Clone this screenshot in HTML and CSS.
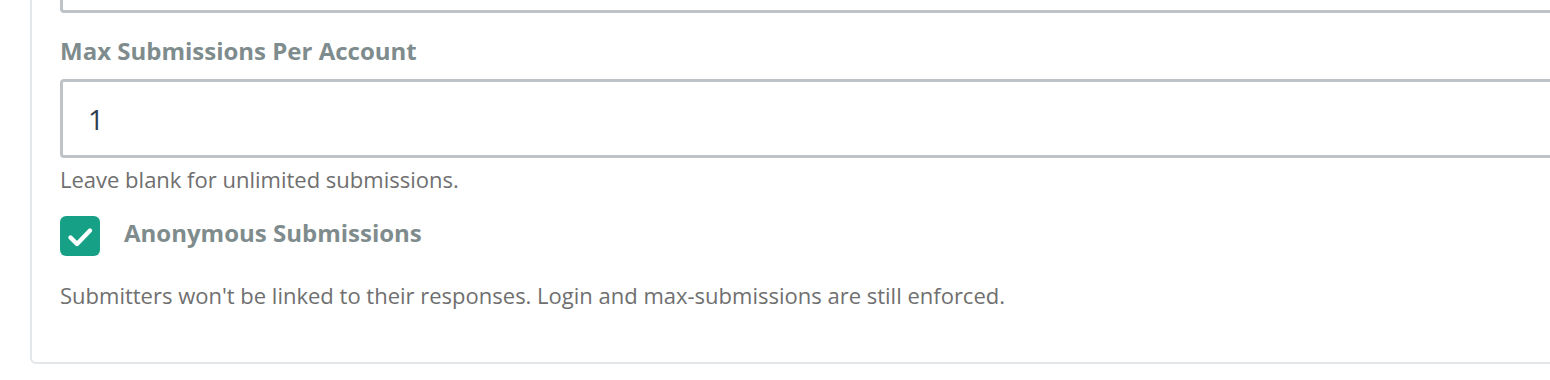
FILE: index.html
```html
<!DOCTYPE html>
<html>
<head>
  <title>Form Settings</title>
  <link rel="stylesheet" href="styles.css">
</head>
<body>
  <div class="card">
    <div class="field">
      <input type="text" class="input input-prev" value="">
    </div>

    <div class="field">
      <label class="label" for="max-submissions">Max Submissions Per Account</label>
      <input type="text" class="input" id="max-submissions" value="1">
      <p class="help">Leave blank for unlimited submissions.</p>
    </div>

    <div class="field">
      <label class="check-row">
        <span class="checkbox">
          <svg class="check-icon" viewBox="0 0 40 40">
            <path d="M10.5 21.5L17 28L30 14.5" fill="none" stroke="#fff" stroke-width="4.4" stroke-linecap="round" stroke-linejoin="round"/>
          </svg>
        </span>
        <span class="label check-label">Anonymous Submissions</span>
      </label>
      <p class="help help-check">Submitters won't be linked to their responses. Login and max-submissions are still enforced.</p>
    </div>
  </div>
</body>
</html>
```

FILE: styles.css
```css
body {
  margin: 0;
  font-family: "Open Sans", Arial, sans-serif;
  background-color: #fff;
  overflow: hidden;
}

.card {
  margin-left: 30px;
  margin-right: -40px;
  margin-top: -60px;
  padding: 0 0 52px 28px;
  border: 2px solid #e4e7ea;
  border-top: none;
  border-radius: 0 0 6px 6px;
}

.input {
  display: block;
  box-sizing: border-box;
  width: 100%;
  height: 79px;
  padding: 0 25px;
  border: 3px solid #bdc3c7;
  border-radius: 4px;
  font-family: "Open Sans", Arial, sans-serif;
  font-size: 28px;
  color: #2c3e50;
  background-color: #fff;
}

.input-prev {
  height: 73px;
}

.label {
  display: block;
  margin: 22px 0 12px;
  font-size: 24px;
  font-weight: bold;
  color: #7f8c8d;
  line-height: 32px;
}

.help {
  margin: 6px 0 0;
  font-size: 22px;
  line-height: 30px;
  color: #6f6f6f;
}

.check-row {
  display: flex;
  align-items: flex-start;
  margin-top: 22px;
}

.checkbox {
  display: block;
  width: 40px;
  height: 40px;
  border-radius: 6px;
  background-color: #16a085;
}

.check-icon {
  display: block;
  width: 40px;
  height: 40px;
}

.check-label {
  margin: 1px 0 0 24px;
}

.help-check {
  margin-top: 24px;
}
```
